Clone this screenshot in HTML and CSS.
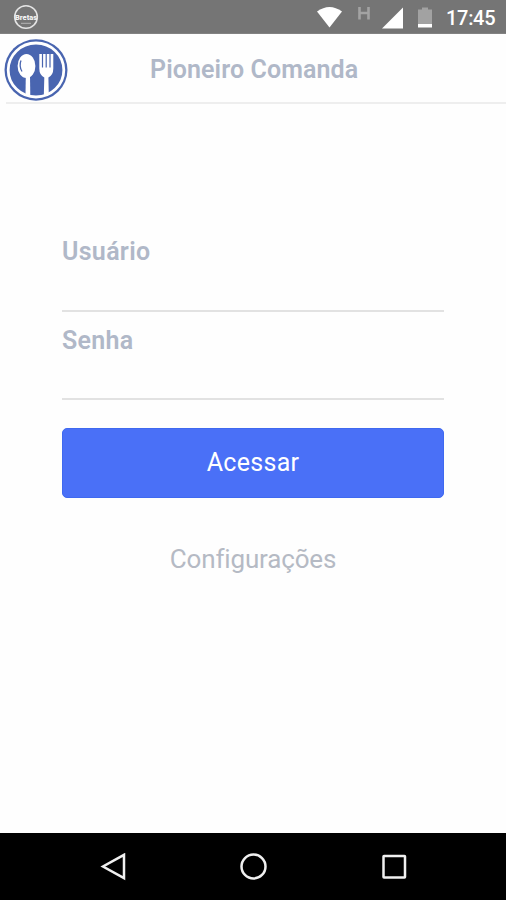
FILE: index.html
```html
<!DOCTYPE html>
<html lang="pt-BR">
<head>
<meta charset="utf-8">
<title>Pioneiro Comanda</title>
<link rel="stylesheet" href="styles.css">
</head>
<body>
<div class="screen">
  <div class="status">
    <svg class="carrier" width="26" height="26" viewBox="0 0 26 26">
      <circle cx="13" cy="13" r="11.3" fill="none" stroke="#e4e4e4" stroke-width="1.6"/>
      <text class="carrier-name" x="13" y="15.6" text-anchor="middle" textLength="22" lengthAdjust="spacingAndGlyphs">Bretas</text>
      <path d="M8 19.3h10" stroke="#b5b5b5" stroke-width="1"/>
    </svg>
    <div class="indicators">
      <svg width="96" height="34" viewBox="0 0 96 34">
        <path d="M0 11.5Q12.500 2.500 25 11.500L12.500 27.500Z" fill="#fff"/>
        <path d="M42.500 7v12.500M51.500 7v12.500M42.500 13h9" fill="none" stroke="#a3a3a3" stroke-width="2.600"/>
        <path d="M86 7.500V28.500H65Z" fill="#fff"/>
      </svg>
      <svg class="battery" width="14" height="34" viewBox="0 0 14 34">
        <path d="M0 9.500h4V7.500h6v2h4V24H0Z" fill="#a2a2a2"/>
        <path d="M0 24h14v3.500H0Z" fill="#fff"/>
      </svg>
      <span class="clock">17:45</span>
    </div>
  </div>
  <header class="header">
    <svg class="logo" width="64" height="62" viewBox="0 0 64 62">
      <ellipse cx="32" cy="31" rx="31.500" ry="30.700" fill="#4965b0"/>
      <ellipse cx="32" cy="31" rx="27.800" ry="27" fill="#4965b0" stroke="#fff" stroke-width="2.800"/>
      <ellipse cx="22.500" cy="27" rx="8.900" ry="12" fill="#fff"/>
      <path d="M21.800 37h4.200l.3 20-4.800-1.500Z" fill="#fff"/>
      <path d="M17 21.500q-2.200 5.500 1 11" fill="none" stroke="#4965b0" stroke-width="1.300"/>
      <path d="M35.300 15h14v14.500q0 6.500-4.900 9l.4 17.500-5 1 .5-18.500q-5-2.500-5-9Z" fill="#fff"/>
      <path d="M38.500 14.500v14M42.200 14.500v14M46 14.500v14" stroke="#4965b0" stroke-width="1.200"/>
    </svg>
    <h1 class="title">Pioneiro Comanda</h1>
  </header>
  <main class="login">
    <label class="field">Usuário</label>
    <label class="field">Senha</label>
    <button class="submit">Acessar</button>
    <a class="settings">Configurações</a>
  </main>
  <nav class="nav">
    <svg width="28" height="28" viewBox="0 0 28 28"><path d="M25 1.800V25.200L4 13.500Z"/></svg>
    <svg width="28" height="28" viewBox="0 0 28 28"><circle cx="13.500" cy="13.500" r="12"/></svg>
    <svg width="28" height="28" viewBox="0 0 28 28"><rect x="3.500" y="3" width="21.500" height="21.500" rx=".5"/></svg>
  </nav>
</div>
</body>
</html>
```
FILE: styles.css
```css
* { box-sizing: border-box; }
body { margin: 0; font-family: Roboto, sans-serif; background: #fefefe; }
svg { display: block; }
.screen { height: 900px; display: flex; flex-direction: column; }
.status {
  height: 34px;
  padding: 0 11px 0 13px;
  display: flex;
  align-items: center;
  justify-content: space-between;
  background: #757575;
  border-bottom: 1px solid #828282;
}
.carrier-name { font: 900 8px Roboto, sans-serif; fill: #f2f2f2; }
.indicators { display: flex; align-items: center; }
.battery { margin-left: 5px; }
.clock {
  width: 49px;
  margin-left: 14px;
  padding-top: 3px;
  font-size: 20px;
  font-weight: 500;
  line-height: 24px;
  letter-spacing: -.3px;
  color: #fff;
  white-space: nowrap;
}
.header {
  height: 70px;
  margin-left: 6px;
  display: flex;
  align-items: center;
  border-bottom: 2px solid #eee;
}
.logo { margin-left: -2px; margin-top: 3px; }
.title {
  margin: 4px 0 0 82px;
  font-size: 25px;
  line-height: 30px;
  font-weight: 600;
  letter-spacing: .1px;
  color: #b0b8c8;
}
.login {
  flex: 1;
  padding: 120px 62px 0;
  display: flex;
  flex-direction: column;
}
.field {
  height: 88px;
  padding-top: 13px;
  font-size: 25px;
  line-height: 30px;
  font-weight: 600;
  letter-spacing: .3px;
  color: #b0b8c8;
  border-bottom: 2px solid #e2e2e2;
}
.field + .field { padding-top: 14px; }
.submit {
  height: 70px;
  margin-top: 28px;
  padding: 0;
  border: 1px solid #3f69f0;
  border-radius: 5px;
  background: #4a70f7;
  color: #fff;
  font: 25px/30px Roboto, sans-serif;
  letter-spacing: .3px;
}
.settings {
  margin-top: 46px;
  text-align: center;
  font-size: 26px;
  line-height: 30px;
  letter-spacing: -.15px;
  color: #b5bac4;
}
.nav {
  height: 67px;
  padding: 0 98px 0 99px;
  display: flex;
  align-items: center;
  justify-content: space-between;
  background: #000;
}
.nav svg { fill: none; stroke: #f0f0f0; stroke-width: 2.5; }
```
